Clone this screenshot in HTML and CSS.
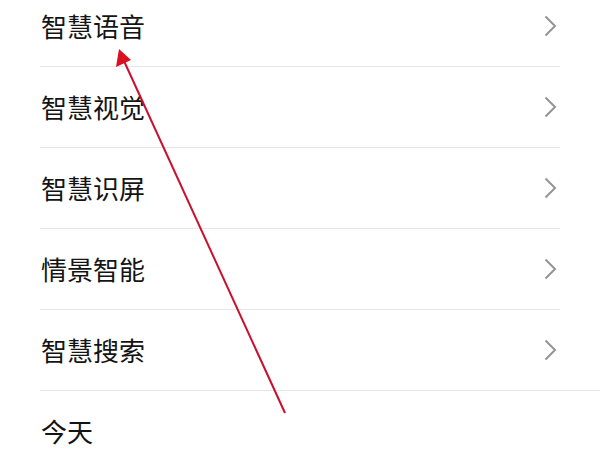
FILE: index.html
```html
<!DOCTYPE html>
<html lang="zh-CN">
<head>
<meta charset="utf-8">
<link rel="stylesheet" href="styles.css">
</head>
<body>
<div class="page">
  <ul class="menu">
    <li class="row"><span class="label">智慧语音</span><svg class="chev" viewBox="0 0 13 22"><path d="M1.5 1.5 L11 11 L1.5 20.5"/></svg></li>
    <li class="row"><span class="label">智慧视觉</span><svg class="chev" viewBox="0 0 13 22"><path d="M1.5 1.5 L11 11 L1.5 20.5"/></svg></li>
    <li class="row"><span class="label">智慧识屏</span><svg class="chev" viewBox="0 0 13 22"><path d="M1.5 1.5 L11 11 L1.5 20.5"/></svg></li>
    <li class="row"><span class="label">情景智能</span><svg class="chev" viewBox="0 0 13 22"><path d="M1.5 1.5 L11 11 L1.5 20.5"/></svg></li>
    <li class="row last"><span class="label">智慧搜索</span><svg class="chev" viewBox="0 0 13 22"><path d="M1.5 1.5 L11 11 L1.5 20.5"/></svg></li>
  </ul>
  <div class="section">
    <span class="label">今天</span>
  </div>
  <svg class="annot" viewBox="0 0 600 450">
    <line x1="285" y1="413" x2="124" y2="61"/>
    <polygon points="119,49 116,67 131,60"/>
  </svg>
</div>
</body>
</html>
```
FILE: styles.css
```css
html, body {
  margin: 0;
  padding: 0;
  background: #ffffff;
}
.page {
  position: relative;
  width: 600px;
  height: 450px;
  overflow: hidden;
  font-family: "Noto Sans CJK SC", "Noto Sans", sans-serif;
  color: #141414;
}
.menu {
  list-style: none;
  margin: -14px 40px 0 40px;
  padding: 0;
}
.row {
  display: flex;
  align-items: center;
  justify-content: space-between;
  height: 80px;
  border-bottom: 1px solid #e6e6e6;
}
.row.last {
  border-bottom: none;
}
.label {
  font-size: 26px;
  line-height: 1;
  padding-left: 1px;
}
.chev {
  width: 13px;
  height: 22px;
  margin-right: 3px;
  fill: none;
  stroke: #949494;
  stroke-width: 2;
}
.section {
  margin-left: 40px;
  border-top: 1px solid #e6e6e6;
  height: 80px;
  display: flex;
  align-items: center;
}
.annot {
  position: absolute;
  left: 0;
  top: 0;
  width: 600px;
  height: 450px;
}
.annot line {
  stroke: #c8102e;
  stroke-width: 2;
}
.annot polygon {
  fill: #d9101f;
}
```
